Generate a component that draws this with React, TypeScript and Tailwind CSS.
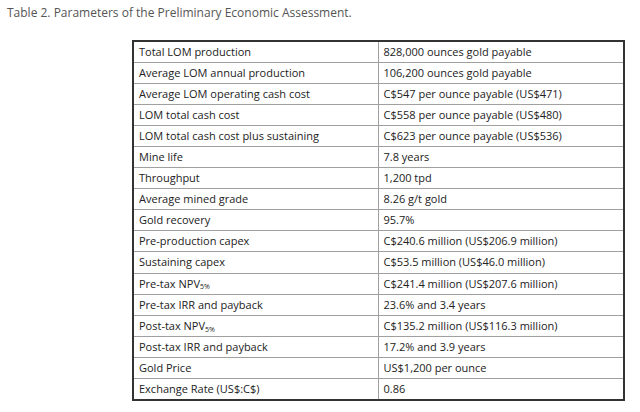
const rows: [React.ReactNode, string][] = [
  ["Total LOM production", "828,000 ounces gold payable"],
  ["Average LOM annual production", "106,200 ounces gold payable"],
  ["Average LOM operating cash cost", "C$547 per ounce payable (US$471)"],
  ["LOM total cash cost", "C$558 per ounce payable (US$480)"],
  ["LOM total cash cost plus sustaining", "C$623 per ounce payable (US$536)"],
  ["Mine life", "7.8 years"],
  ["Throughput", "1,200 tpd"],
  ["Average mined grade", "8.26 g/t gold"],
  ["Gold recovery", "95.7%"],
  ["Pre-production capex", "C$240.6 million (US$206.9 million)"],
  ["Sustaining capex", "C$53.5 million (US$46.0 million)"],
  [
    <>
      Pre-tax NPV<sub className="text-[7px]">5%</sub>
    </>,
    "C$241.4 million (US$207.6 million)",
  ],
  ["Pre-tax IRR and payback", "23.6% and 3.4 years"],
  [
    <>
      Post-tax NPV<sub className="text-[7px]">5%</sub>
    </>,
    "C$135.2 million (US$116.3 million)",
  ],
  ["Post-tax IRR and payback", "17.2% and 3.9 years"],
  ["Gold Price", "US$1,200 per ounce"],
  ["Exchange Rate (US$:C$)", "0.86"],
];

export default function App() {
  return (
    <div className="w-[640px] h-[412px] bg-white overflow-hidden">
      <p className="pl-[7px] pt-[5px] text-[12px] leading-[16px] text-[#555] font-['Open_Sans',sans-serif]">
        Table 2. Parameters of the Preliminary Economic Assessment.
      </p>
      <div className="mt-[19px] ml-[132px] w-[493px]">
        <table className="w-full border-collapse border-2 border-[#333] font-['Open_Sans',sans-serif] text-[11px] text-[#222]">
          <tbody>
            {rows.map(([label, value], i) => (
              <tr key={i} className="h-[21.1px]">
                <td className="w-[245px] border border-[#a0a0a0] px-[5px] py-0 leading-[14px]">
                  {label}
                </td>
                <td className="border border-[#a0a0a0] px-[5px] py-0 leading-[14px]">
                  {value}
                </td>
              </tr>
            ))}
          </tbody>
        </table>
      </div>
    </div>
  );
}
